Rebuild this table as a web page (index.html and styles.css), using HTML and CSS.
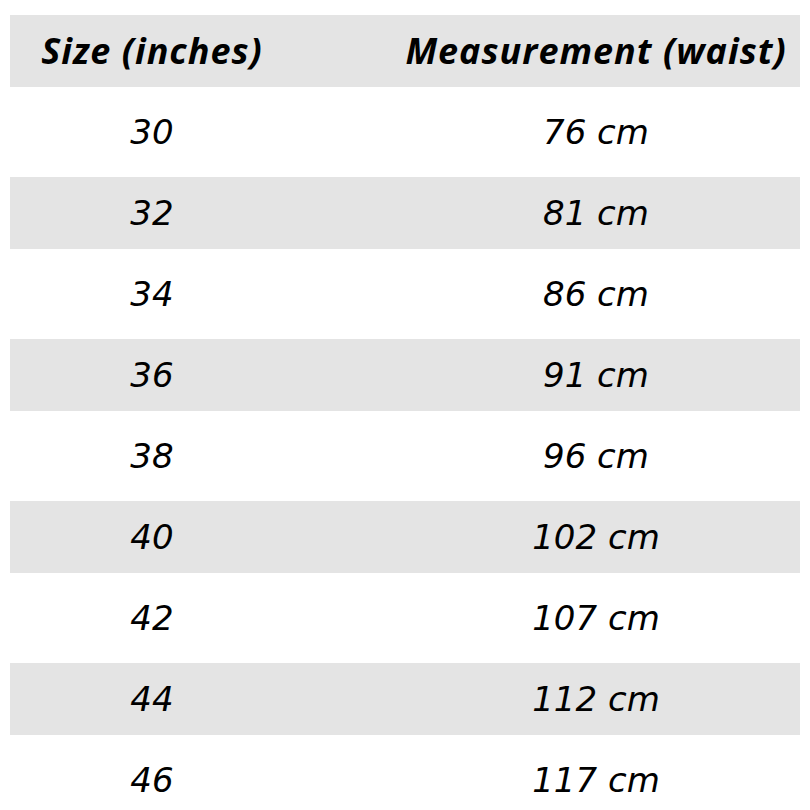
FILE: index.html
```html
<!DOCTYPE html>
<html>
<head>
<meta charset="utf-8">
<link rel="stylesheet" href="styles.css">
</head>
<body>
<div class="chart">
  <div class="row head"><div class="c1">Size (inches)</div><div class="c2">Measurement (waist)</div></div>
  <div class="row"><div class="c1">30</div><div class="c2">76 cm</div></div>
  <div class="row alt"><div class="c1">32</div><div class="c2">81 cm</div></div>
  <div class="row"><div class="c1">34</div><div class="c2">86 cm</div></div>
  <div class="row alt"><div class="c1">36</div><div class="c2">91 cm</div></div>
  <div class="row"><div class="c1">38</div><div class="c2">96 cm</div></div>
  <div class="row alt"><div class="c1">40</div><div class="c2">102 cm</div></div>
  <div class="row"><div class="c1">42</div><div class="c2">107 cm</div></div>
  <div class="row alt"><div class="c1">44</div><div class="c2">112 cm</div></div>
  <div class="row"><div class="c1">46</div><div class="c2">117 cm</div></div>
</div>
</body>
</html>
```
FILE: styles.css
```css
html, body {
  margin: 0;
  padding: 0;
  background: #ffffff;
  overflow: hidden;
}
body {
  width: 810px;
  height: 810px;
  font-family: "DejaVu Sans", "Open Sans", sans-serif;
  font-style: italic;
  color: #000;
}
.chart {
  display: flex;
  flex-direction: column;
  gap: 9px;
  padding: 15px 10px 0 10px;
}
.row {
  display: grid;
  grid-template-columns: 284px 1fr;
  height: 72px;
  align-items: center;
  font-size: 34px;
  line-height: 1;
}
.head {
  background: #e4e4e4;
  font-family: "Open Sans", "DejaVu Sans", sans-serif;
  font-weight: 700;
  font-size: 36px;
  letter-spacing: 1px;
}
.alt {
  background: #e4e4e4;
}
.c1 {
  text-align: center;
}
.c2 {
  text-align: center;
  padding-left: 98px;
}
```
